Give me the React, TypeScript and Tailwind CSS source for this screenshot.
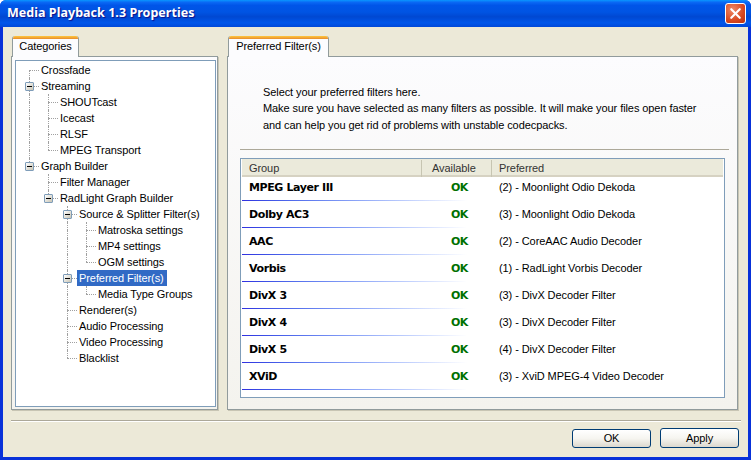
import { X } from 'lucide-react';

type Guide = 'none' | 'line' | 'tee' | 'elbow' | 'first';

type TreeRow = {
  label: string;
  guides: Guide[];
  box?: boolean;
  selected?: boolean;
};

const treeRows: TreeRow[] = [
  { label: 'Crossfade', guides: ['first'] },
  { label: 'Streaming', guides: ['tee'], box: true },
  { label: 'SHOUTcast', guides: ['line', 'tee'] },
  { label: 'Icecast', guides: ['line', 'tee'] },
  { label: 'RLSF', guides: ['line', 'tee'] },
  { label: 'MPEG Transport', guides: ['line', 'elbow'] },
  { label: 'Graph Builder', guides: ['elbow'], box: true },
  { label: 'Filter Manager', guides: ['none', 'tee'] },
  { label: 'RadLight Graph Builder', guides: ['none', 'elbow'], box: true },
  { label: 'Source & Splitter Filter(s)', guides: ['none', 'none', 'tee'], box: true },
  { label: 'Matroska settings', guides: ['none', 'none', 'line', 'tee'] },
  { label: 'MP4 settings', guides: ['none', 'none', 'line', 'tee'] },
  { label: 'OGM settings', guides: ['none', 'none', 'line', 'elbow'] },
  { label: 'Preferred Filter(s)', guides: ['none', 'none', 'tee'], box: true, selected: true },
  { label: 'Media Type Groups', guides: ['none', 'none', 'line', 'elbow'] },
  { label: 'Renderer(s)', guides: ['none', 'none', 'tee'] },
  { label: 'Audio Processing', guides: ['none', 'none', 'tee'] },
  { label: 'Video Processing', guides: ['none', 'none', 'tee'] },
  { label: 'Blacklist', guides: ['none', 'none', 'elbow'] },
];

const filters = [
  { group: 'MPEG Layer III', preferred: '(2) - Moonlight Odio Dekoda' },
  { group: 'Dolby AC3', preferred: '(3) - Moonlight Odio Dekoda' },
  { group: 'AAC', preferred: '(2) - CoreAAC Audio Decoder' },
  { group: 'Vorbis', preferred: '(1) - RadLight Vorbis Decoder' },
  { group: 'DivX 3', preferred: '(3) - DivX Decoder Filter' },
  { group: 'DivX 4', preferred: '(3) - DivX Decoder Filter' },
  { group: 'DivX 5', preferred: '(4) - DivX Decoder Filter' },
  { group: 'XViD', preferred: '(3) - XviD MPEG-4 Video Decoder' },
];

function GuideCell({ guide, box }: { guide: Guide; box?: boolean }) {
  const showTop = guide === 'line' || guide === 'tee' || guide === 'elbow';
  const showBottom = guide === 'line' || guide === 'tee' || guide === 'first';
  const showArm = guide !== 'line' && guide !== 'none';

  return (
    <div className="relative h-4 w-[19px] shrink-0">
      {showTop && (
        <div className="absolute left-[9px] top-0 h-2 border-l border-dotted border-[#a0a0a0]" />
      )}
      {showBottom && (
        <div className="absolute left-[9px] top-2 h-2 border-l border-dotted border-[#a0a0a0]" />
      )}
      {showArm && (
        <div className="absolute left-[9px] top-2 w-[10px] border-t border-dotted border-[#a0a0a0]" />
      )}
      {box && (
        <div className="absolute left-[5px] top-1 flex h-[9px] w-[9px] items-center justify-center rounded-[1px] border border-[#7f9db9] bg-linear-to-br from-white to-[#c8c4b4]">
          <div className="h-px w-[5px] bg-black" />
        </div>
      )}
    </div>
  );
}

function Tab({ label, width }: { label: string; width: string }) {
  return (
    <div
      className={`relative z-10 -mb-px h-[21px] ${width} overflow-hidden rounded-t-[3px] border-x border-[#919b9c] bg-[#fcfcfe] text-center text-black`}
    >
      <div className="h-[3px] bg-linear-to-b from-[#ffc73c] to-[#e68b2c]" />
      <div className="text-[11px] leading-[15px]">{label}</div>
    </div>
  );
}

function XpButton({ label, className }: { label: string; className: string }) {
  return (
    <button
      className={`w-[79px] rounded-[3px] border border-[#003c74] bg-linear-to-b from-white via-[#f6f5f0] to-[#dcd8ce] text-[11px] leading-none text-black ${className}`}
    >
      {label}
    </button>
  );
}

export default function App() {
  return (
    <div className="flex h-[460px] w-[751px] flex-col overflow-hidden rounded-t-[6px] bg-[#0831d9] font-['Liberation_Sans',Arial,sans-serif] text-[11px] tracking-[-0.08px] text-black">
      {/* Title bar */}
      <div className="flex h-[27px] shrink-0 items-center justify-between bg-[linear-gradient(180deg,#0997ff_0%,#0a6af5_8%,#0055e8_20%,#0054e3_45%,#0048d2_62%,#0056ea_85%,#0048d8_100%)] pl-[7px] pr-[5px]">
        <span className="font-['Noto_Sans',sans-serif] text-[12.5px] font-bold tracking-[0.04px] text-white [text-shadow:1px_1px_1px_#0f1089]">
          Media Playback 1.3 Properties
        </span>
        <div className="flex h-[21px] w-[21px] items-center justify-center rounded-[3px] border border-white bg-[radial-gradient(circle_at_35%_30%,#ee8a68,#d9481f_60%,#b8300f)]">
          <X size={17} strokeWidth={3} className="text-white" />
        </div>
      </div>

      <div className="mx-[3px] mb-[3px] flex min-h-0 flex-1 flex-col bg-[#ece9d8] pt-[9px]">
        <div className="flex gap-[9px] pl-2 pr-[10px]">
          {/* Categories */}
          <div className="flex w-[207px] flex-col">
            <div className="pl-px">
              <Tab label="Categories" width="w-[67px]" />
            </div>
            <div className="h-[354px] border border-[#919b9c] bg-linear-to-b from-[#fcfcfe] to-[#f4f3ee] py-[3px] pl-[3px] pr-px shadow-[1px_1px_0_#c8c5b4]">
              <div className="h-[347px] border border-[#7f9db9] bg-white pt-px">
                {treeRows.map(row => (
                  <div key={row.label} className="flex h-4 pl-1">
                    {row.guides.map((guide, i) => (
                      <GuideCell
                        key={i}
                        guide={guide}
                        box={row.box && i === row.guides.length - 1}
                      />
                    ))}
                    <span
                      className={`h-4 whitespace-nowrap px-[2px] leading-4 ${
                        row.selected ? 'bg-[#316ac5] pr-[3px] text-white' : ''
                      }`}
                    >
                      {row.label}
                    </span>
                  </div>
                ))}
              </div>
            </div>
          </div>

          {/* Preferred filters */}
          <div className="flex flex-1 flex-col">
            <div className="pl-px">
              <Tab label="Preferred Filter(s)" width="w-[101px]" />
            </div>
            <div className="h-[354px] border border-[#919b9c] bg-linear-to-b from-[#fcfcfe] to-[#f4f3ee] pl-3 pr-2 pt-[26.5px] shadow-[1px_1px_0_#c8c5b4]">
              <div className="pl-[23px] leading-[16.5px]">
                <p>Select your preferred filters here.</p>
                <p>Make sure you have selected as many filters as possible. It will make your files open faster</p>
                <p>and can help you get rid of problems with unstable codecpacks.</p>
              </div>
              <div className="mt-4 border-t border-[#aca899]" />

              <div className="mt-2 h-[240px] w-[485px] border border-[#7f9db9] bg-white">
                <div className="mx-px grid h-[18px] grid-cols-[179px_70px_1fr] items-center border-b-2 border-[#d6d2c2] bg-[#ebeadb] pt-px text-[#333]">
                  <div className="pl-[7px]">Group</div>
                  <div className="border-l border-[#c7c5b2] pl-[10px]">Available</div>
                  <div className="border-l border-[#c7c5b2] pl-[7px]">Preferred</div>
                </div>
                {filters.map((row, i) => (
                  <div key={row.group} className={i === 0 ? 'h-[24px]' : 'h-[27px]'}>
                    <div
                      className={`grid h-[calc(100%-1px)] grid-cols-[181px_70px_1fr] items-center ${
                        i === 0 ? 'pb-[3px]' : ''
                      }`}
                    >
                      <div className="pl-2 pt-[2px] font-['DejaVu_Sans',sans-serif] text-[11px] font-bold tracking-[-0.4px]">{row.group}</div>
                      <div className="pl-[29px] pt-[2px] font-['DejaVu_Sans',sans-serif] text-[11px] font-bold tracking-[-0.7px] text-[#007000]">OK</div>
                      <div className="pl-[7px]">{row.preferred}</div>
                    </div>
                    <div className="mx-px h-px w-[225px] bg-linear-to-r from-[#3030e0] to-white" />
                  </div>
                ))}
              </div>
            </div>
          </div>
        </div>

        {/* Bottom */}
        <div className="ml-2 mr-[7px] mt-[10px] border-t border-b border-t-[#aca899] border-b-white" />
        <div className="mt-[6px] flex items-start justify-end gap-[9px] pr-[9px]">
          <XpButton label="OK" className="mt-px h-[19px]" />
          <XpButton label="Apply" className="h-5" />
        </div>
      </div>
    </div>
  );
}
